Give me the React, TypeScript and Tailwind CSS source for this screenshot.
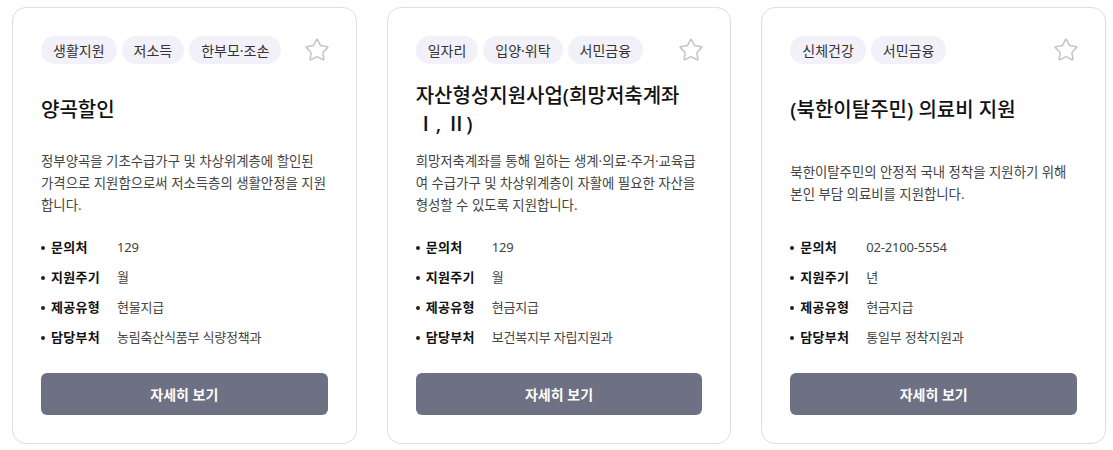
import { Star } from "lucide-react";

interface Benefit {
  tags: string[];
  title: string;
  desc: string;
  contact: string;
  cycle: string;
  kind: string;
  dept: string;
}

const benefits: Benefit[] = [
  {
    tags: ["생활지원", "저소득", "한부모·조손"],
    title: "양곡할인",
    desc: "정부양곡을 기초수급가구 및 차상위계층에 할인된 가격으로 지원함으로써 저소득층의 생활안정을 지원합니다.",
    contact: "129",
    cycle: "월",
    kind: "현물지급",
    dept: "농림축산식품부 식량정책과",
  },
  {
    tags: ["일자리", "입양·위탁", "서민금융"],
    title: "자산형성지원사업(희망저축계좌 Ⅰ, Ⅱ)",
    desc: "희망저축계좌를 통해 일하는 생계·의료·주거·교육급여 수급가구 및 차상위계층이 자활에 필요한 자산을 형성할 수 있도록 지원합니다.",
    contact: "129",
    cycle: "월",
    kind: "현금지급",
    dept: "보건복지부 자립지원과",
  },
  {
    tags: ["신체건강", "서민금융"],
    title: "(북한이탈주민) 의료비 지원",
    desc: "북한이탈주민의 안정적 국내 정착을 지원하기 위해 본인 부담 의료비를 지원합니다.",
    contact: "02-2100-5554",
    cycle: "년",
    kind: "현금지급",
    dept: "통일부 정착지원과",
  },
];

function InfoRow({ label, value }: { label: string; value: string }) {
  return (
    <li className="flex h-[30px] items-center text-[13px]">
      <span className="mr-[6px] h-[4px] w-[4px] shrink-0 rounded-full bg-[#222]" />
      <span className="w-[66px] shrink-0 font-bold tracking-[0.3px] text-[#111]">{label}</span>
      <span className="tracking-[-0.2px] text-[#444]">{value}</span>
    </li>
  );
}

function BenefitCard({ b }: { b: Benefit }) {
  return (
    <div className="flex flex-col rounded-[14px] border border-[#dedede] bg-white px-7 pb-7 pt-7">
      <div className="flex h-7 items-center justify-between">
        <div className="flex gap-[5px]">
          {b.tags.map((t) => (
            <span
              key={t}
              className="flex h-7 items-center rounded-full bg-[#f2f1f9] px-[12px] text-[14px] text-[#333]"
            >
              {t}
            </span>
          ))}
        </div>
        <Star size={26} strokeWidth={1.4} className="mr-[-2px] text-[#c4c4c4]" />
      </div>

      <div className="mt-[18px] flex h-[56px] items-center">
        <h2 className="break-keep text-[20px] font-medium leading-[28px] text-[#111]">{b.title}</h2>
      </div>

      <div className="mt-3 flex h-[66px] items-center">
        <p className="text-[13.4px] leading-[22px] text-[#444]">{b.desc}</p>
      </div>

      <ul className="mt-[17px] flex flex-col">
        <InfoRow label="문의처" value={b.contact} />
        <InfoRow label="지원주기" value={b.cycle} />
        <InfoRow label="제공유형" value={b.kind} />
        <InfoRow label="담당부처" value={b.dept} />
      </ul>

      <button className="mt-5 h-[42px] w-full rounded-md bg-[#6e7083] text-[14px] font-bold text-white">
        자세히 보기
      </button>
    </div>
  );
}

export default function App() {
  return (
    <div
      className="min-h-[450px] bg-white pl-3 pr-[7px] pt-[7px]"
      style={{ fontFamily: '"Noto Sans", "Noto Sans CJK KR", sans-serif' }}
    >
      <div className="grid grid-cols-3 gap-[30px]">
        {benefits.map((b) => (
          <BenefitCard key={b.title} b={b} />
        ))}
      </div>
    </div>
  );
}
